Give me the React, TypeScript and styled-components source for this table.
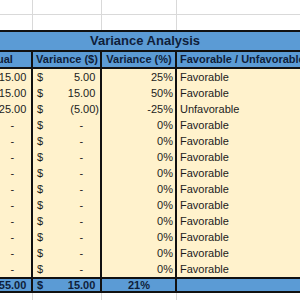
import React from 'react';
import styled, { createGlobalStyle } from 'styled-components';

const GlobalStyle = createGlobalStyle`
  body {
    margin: 0;
    font-family: 'Liberation Sans', Arial, sans-serif;
  }
`;

const BLUE = '#5b9bd5';
const CREAM = '#fff2cc';
const INK = '#111';
const GRID = '#d9d9d9';
const NAVY = '#0f1e3a';
const COLUMNS = '73px 69px 75px 153px';

const Viewport = styled.div`
  width: 300px;
  height: 300px;
  overflow: hidden;
  background: #fff;
`;

// the sheet is scrolled a little to the right, so column A is only partly shown
const Sheet = styled.div`
  width: 370px;
  margin-left: -40px;
  display: flex;
  flex-direction: column;
`;

const BlankRow = styled.div<{ $h: number; $line?: boolean }>`
  display: grid;
  grid-template-columns: ${COLUMNS};
  height: ${(p) => p.$h}px;
  border-bottom: ${(p) => (p.$line ? `1px solid ${GRID}` : 'none')};
`;

const BlankCell = styled.div`
  border-right: 1px solid ${GRID};
`;

const TitleRow = styled.div`
  background: ${BLUE};
  border-top: 2px solid ${INK};
  border-bottom: 2px solid ${INK};
  height: 18px;
  line-height: 18px;
  text-align: center;
  font-weight: bold;
  font-size: 13px;
  color: ${NAVY};
`;

const Row = styled.div<{ $bg: string; $h: number }>`
  display: grid;
  grid-template-columns: ${COLUMNS};
  background: ${(p) => p.$bg};
  height: ${(p) => p.$h}px;
  line-height: ${(p) => p.$h}px;
  font-size: 11px;
`;

const HeaderRow = styled(Row)`
  border-bottom: 2px solid ${INK};
  font-weight: bold;
  color: ${NAVY};
`;

const TotalRow = styled(Row)`
  border-top: 2px solid ${INK};
  border-bottom: 2px solid ${INK};
  font-weight: bold;
  color: ${NAVY};
`;

const Cell = styled.div<{ $align?: 'left' | 'center' | 'right'; $last?: boolean }>`
  text-align: ${(p) => p.$align || 'left'};
  border-right: ${(p) => (p.$last ? 'none' : `2px solid ${INK}`)};
  padding: 0 2px 0 3px;
  white-space: nowrap;
  overflow: hidden;
  color: inherit;
`;

const MoneyCell = styled(Cell)`
  display: flex;
  justify-content: space-between;
  padding: 0 1px 0 4px;
`;

const Ghost = styled.span`
  visibility: hidden;
`;

const DataText = styled.span`
  color: #1c1c1c;
`;

type Line = { actual: number; variance: number; pct: string; verdict: string };

const lines: Line[] = [
  { actual: 15, variance: 5, pct: '25%', verdict: 'Favorable' },
  { actual: 15, variance: 15, pct: '50%', verdict: 'Favorable' },
  { actual: 25, variance: -5, pct: '-25%', verdict: 'Unfavorable' },
  ...Array.from({ length: 10 }, () => ({ actual: 0, variance: 0, pct: '0%', verdict: 'Favorable' })),
];

function Money({ value }: { value: number }) {
  let text = value.toFixed(2);
  let ghost = ')';
  if (value === 0) {
    text = '-';
    ghost = '00)';
  } else if (value < 0) {
    text = `(${Math.abs(value).toFixed(2)})`;
    ghost = '';
  }
  return (
    <MoneyCell>
      <span>$</span>
      <span>
        {text}
        <Ghost>{ghost}</Ghost>
      </span>
    </MoneyCell>
  );
}

export default function App() {
  return (
    <Viewport>
      <GlobalStyle />
      <Sheet>
        <BlankRow $h={14} $line>
          <BlankCell />
          <BlankCell />
          <BlankCell />
          <div />
        </BlankRow>
        <BlankRow $h={15}>
          <BlankCell />
          <BlankCell />
          <BlankCell />
          <div />
        </BlankRow>

        <TitleRow>Variance Analysis</TitleRow>

        <HeaderRow $bg={BLUE} $h={15}>
          <Cell $align="center">Actual</Cell>
          <Cell $align="center">Variance ($)</Cell>
          <Cell $align="center">Variance (%)</Cell>
          <Cell $last>Favorable / Unfavorable</Cell>
        </HeaderRow>

        {lines.map((l, i) => (
          <Row key={i} $bg={CREAM} $h={16} style={{ color: '#1c1c1c' }}>
            <Money value={l.actual} />
            <Money value={l.variance} />
            <Cell $align="right">{l.pct}</Cell>
            <Cell $last>
              <DataText>{l.verdict}</DataText>
            </Cell>
          </Row>
        ))}

        <TotalRow $bg={BLUE} $h={12}>
          <Money value={55} />
          <Money value={15} />
          <Cell $align="center">21%</Cell>
          <Cell $last />
        </TotalRow>

        <BlankRow $h={20}>
          <BlankCell />
          <BlankCell />
          <BlankCell />
          <div />
        </BlankRow>
      </Sheet>
    </Viewport>
  );
}
